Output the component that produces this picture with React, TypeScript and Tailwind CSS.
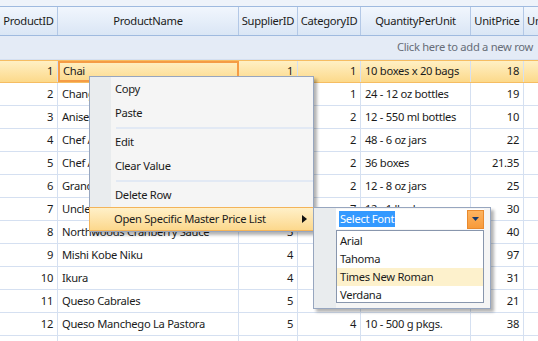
import React from 'react';

type Product = [number | string, string, number | string, number | string, string, string]

const products: Product[] = [
    [1, 'Chai', 1, 1, '10 boxes x 20 bags', '18'],
    [2, 'Chang', 1, 1, '24 - 12 oz bottles', '19'],
    [3, 'Aniseed Syrup', 1, 2, '12 - 550 ml bottles', '10'],
    [4, "Chef Anton's Cajun Seasoning", 2, 2, '48 - 6 oz jars', '22'],
    [5, "Chef Anton's Gumbo Mix", 2, 2, '36 boxes', '21.35'],
    [6, "Grandma's Boysenberry Spread", 3, 2, '12 - 8 oz jars', '25'],
    [7, "Uncle Bob's Organic Dried Pears", 3, 7, '12 - 1 lb pkgs.', '30'],
    [8, 'Northwoods Cranberry Sauce', 3, 2, '12 - 12 oz jars', '40'],
    [9, 'Mishi Kobe Niku', 4, 6, '18 - 500 g pkgs.', '97'],
    [10, 'Ikura', 4, 8, '12 - 200 ml jars', '31'],
    [11, 'Queso Cabrales', 5, 4, '1 kg pkg.', '21'],
    [12, 'Queso Manchego La Pastora', 5, 4, '10 - 500 g pkgs.', '38'],
    ['', '', '', '', '', '']
]

const headers = ['ProductID', 'ProductName', 'SupplierID', 'CategoryID', 'QuantityPerUnit', 'UnitPrice', 'UnitsInStock']
const widths = ['w-[58px]', 'w-[181px]', 'w-[59px]', 'w-[63px]', 'w-[110px]', 'w-[53px]', 'w-[70px]']

const Row = ({ p, selected }: { p: Product, selected: boolean }) => {
    const cells = [String(p[0]), p[1], String(p[2]), String(p[3]), p[4], p[5], '']
    const right = [true, false, true, true, false, true, true]
    return (
        <div className={`flex h-[23px] shrink-0 ${selected ? 'bg-gradient-to-b from-[#fff0c4] to-[#fcd98a] border-y border-[#f6bd62]' : 'bg-white border-b border-[#d5e0f1]'}`}>
            {cells.map((c, i) => (
                <div
                    key={i}
                    className={`${widths[i]} shrink-0 h-full flex items-center px-[4px] whitespace-nowrap overflow-hidden
                        ${right[i] ? 'justify-end' : 'justify-start'}
                        ${selected && i === 1 ? 'border-2 border-[#f59c45] pl-[3px]' : 'border-r border-[#d5e0f1]'}`}
                >
                    {c}
                </div>
            ))}
        </div>
    )
}

const MenuItem = ({ label }: { label: string }) => (
    <div className="h-[24px] flex items-center pl-[25px]">{label}</div>
)

const Sep = () => (
    <div className="h-[5px] flex items-center pl-[26px]">
        <div className="h-[2px] w-full bg-[#e2e9f4]" />
    </div>
)

const App = () => {
    return (
        <div className="relative w-[538px] h-[341px] overflow-hidden bg-white text-[11.2px] tracking-[-0.3px] text-[#1b1b1b]" style={{ fontFamily: '"Noto Sans", sans-serif' }}>
            <div className="h-[6px] bg-[#eef3fa]" />

            {/* header */}
            <div className="flex h-[30px] bg-gradient-to-b from-[#f1f6fd] to-[#dae6f5] border-y border-[#9fbadf]">
                {headers.map((h, i) => (
                    <div key={h} className={`${widths[i]} shrink-0 flex items-center justify-center border-r border-[#b3c8e6] whitespace-nowrap overflow-hidden`}>
                        {h}
                    </div>
                ))}
            </div>

            {/* new row */}
            <div className="h-[24px] flex items-center justify-end pr-[5px] bg-[#e4ebf6] border-b border-[#d5e0f1] text-[#676d78]">
                Click here to add a new row
            </div>

            {products.map((p, i) => (
                <Row key={i} p={p} selected={i === 0} />
            ))}

            {/* context menu */}
            <div className="absolute left-[89px] top-[76px] w-[225px] border border-[#97a6bf] bg-[#f5f5f5] shadow-[3px_3px_3px_rgba(0,0,0,0.3)]">
                <div className="absolute left-0 top-0 bottom-0 w-[21px] bg-[#e9ecee]" />
                <div className="relative">
                    <MenuItem label="Copy" />
                    <MenuItem label="Paste" />
                    <Sep />
                    <MenuItem label="Edit" />
                    <MenuItem label="Clear Value" />
                    <Sep />
                    <MenuItem label="Delete Row" />
                    <div className="h-[24px] flex items-center justify-between pl-[24px] pr-[6px] border border-[#f3b45a] bg-gradient-to-b from-[#fff0c8] to-[#fcd88c] -mx-px">
                        <span>Open Specific Master Price List</span>
                        <svg width="5" height="8" viewBox="0 0 5 8"><path d="M0 0 L5 4 L0 8 Z" fill="#111" /></svg>
                    </div>
                </div>
            </div>

            {/* submenu */}
            <div className="absolute left-[313px] top-[207px] w-[178px] h-[102px] border border-[#97a6bf] bg-[#f5f5f5] shadow-[3px_3px_3px_rgba(0,0,0,0.3)]">
                <div className="absolute left-0 top-0 bottom-0 w-[22px] bg-[#e9ecee]" />
                <div className="absolute left-[22px] top-[1px] w-[148px] h-[20px] flex items-center bg-white">
                    <span className="ml-[3px] px-px bg-[#3399ff] text-white leading-[16px]">Select Font</span>
                    <div className="ml-auto w-[17px] h-[19px] flex items-center justify-center border border-[#e98a2e] bg-gradient-to-b from-[#fdb45f] to-[#f79a3a]">
                        <svg width="7" height="4" viewBox="0 0 7 4"><path d="M0 0 L7 0 L3.5 4 Z" fill="#163a6d" /></svg>
                    </div>
                </div>
                <div className="absolute left-[22px] top-[22px] w-[148px] h-[73px] border border-[#8896ad] bg-white py-px">
                    <div className="h-[18px] flex items-center pl-[3px]">Arial</div>
                    <div className="h-[18px] flex items-center pl-[3px]">Tahoma</div>
                    <div className="h-[18px] flex items-center pl-[3px] bg-[#fdf1cc]">Times New Roman</div>
                    <div className="h-[18px] flex items-center pl-[3px]">Verdana</div>
                </div>
            </div>
        </div>
    )
}

export default App
